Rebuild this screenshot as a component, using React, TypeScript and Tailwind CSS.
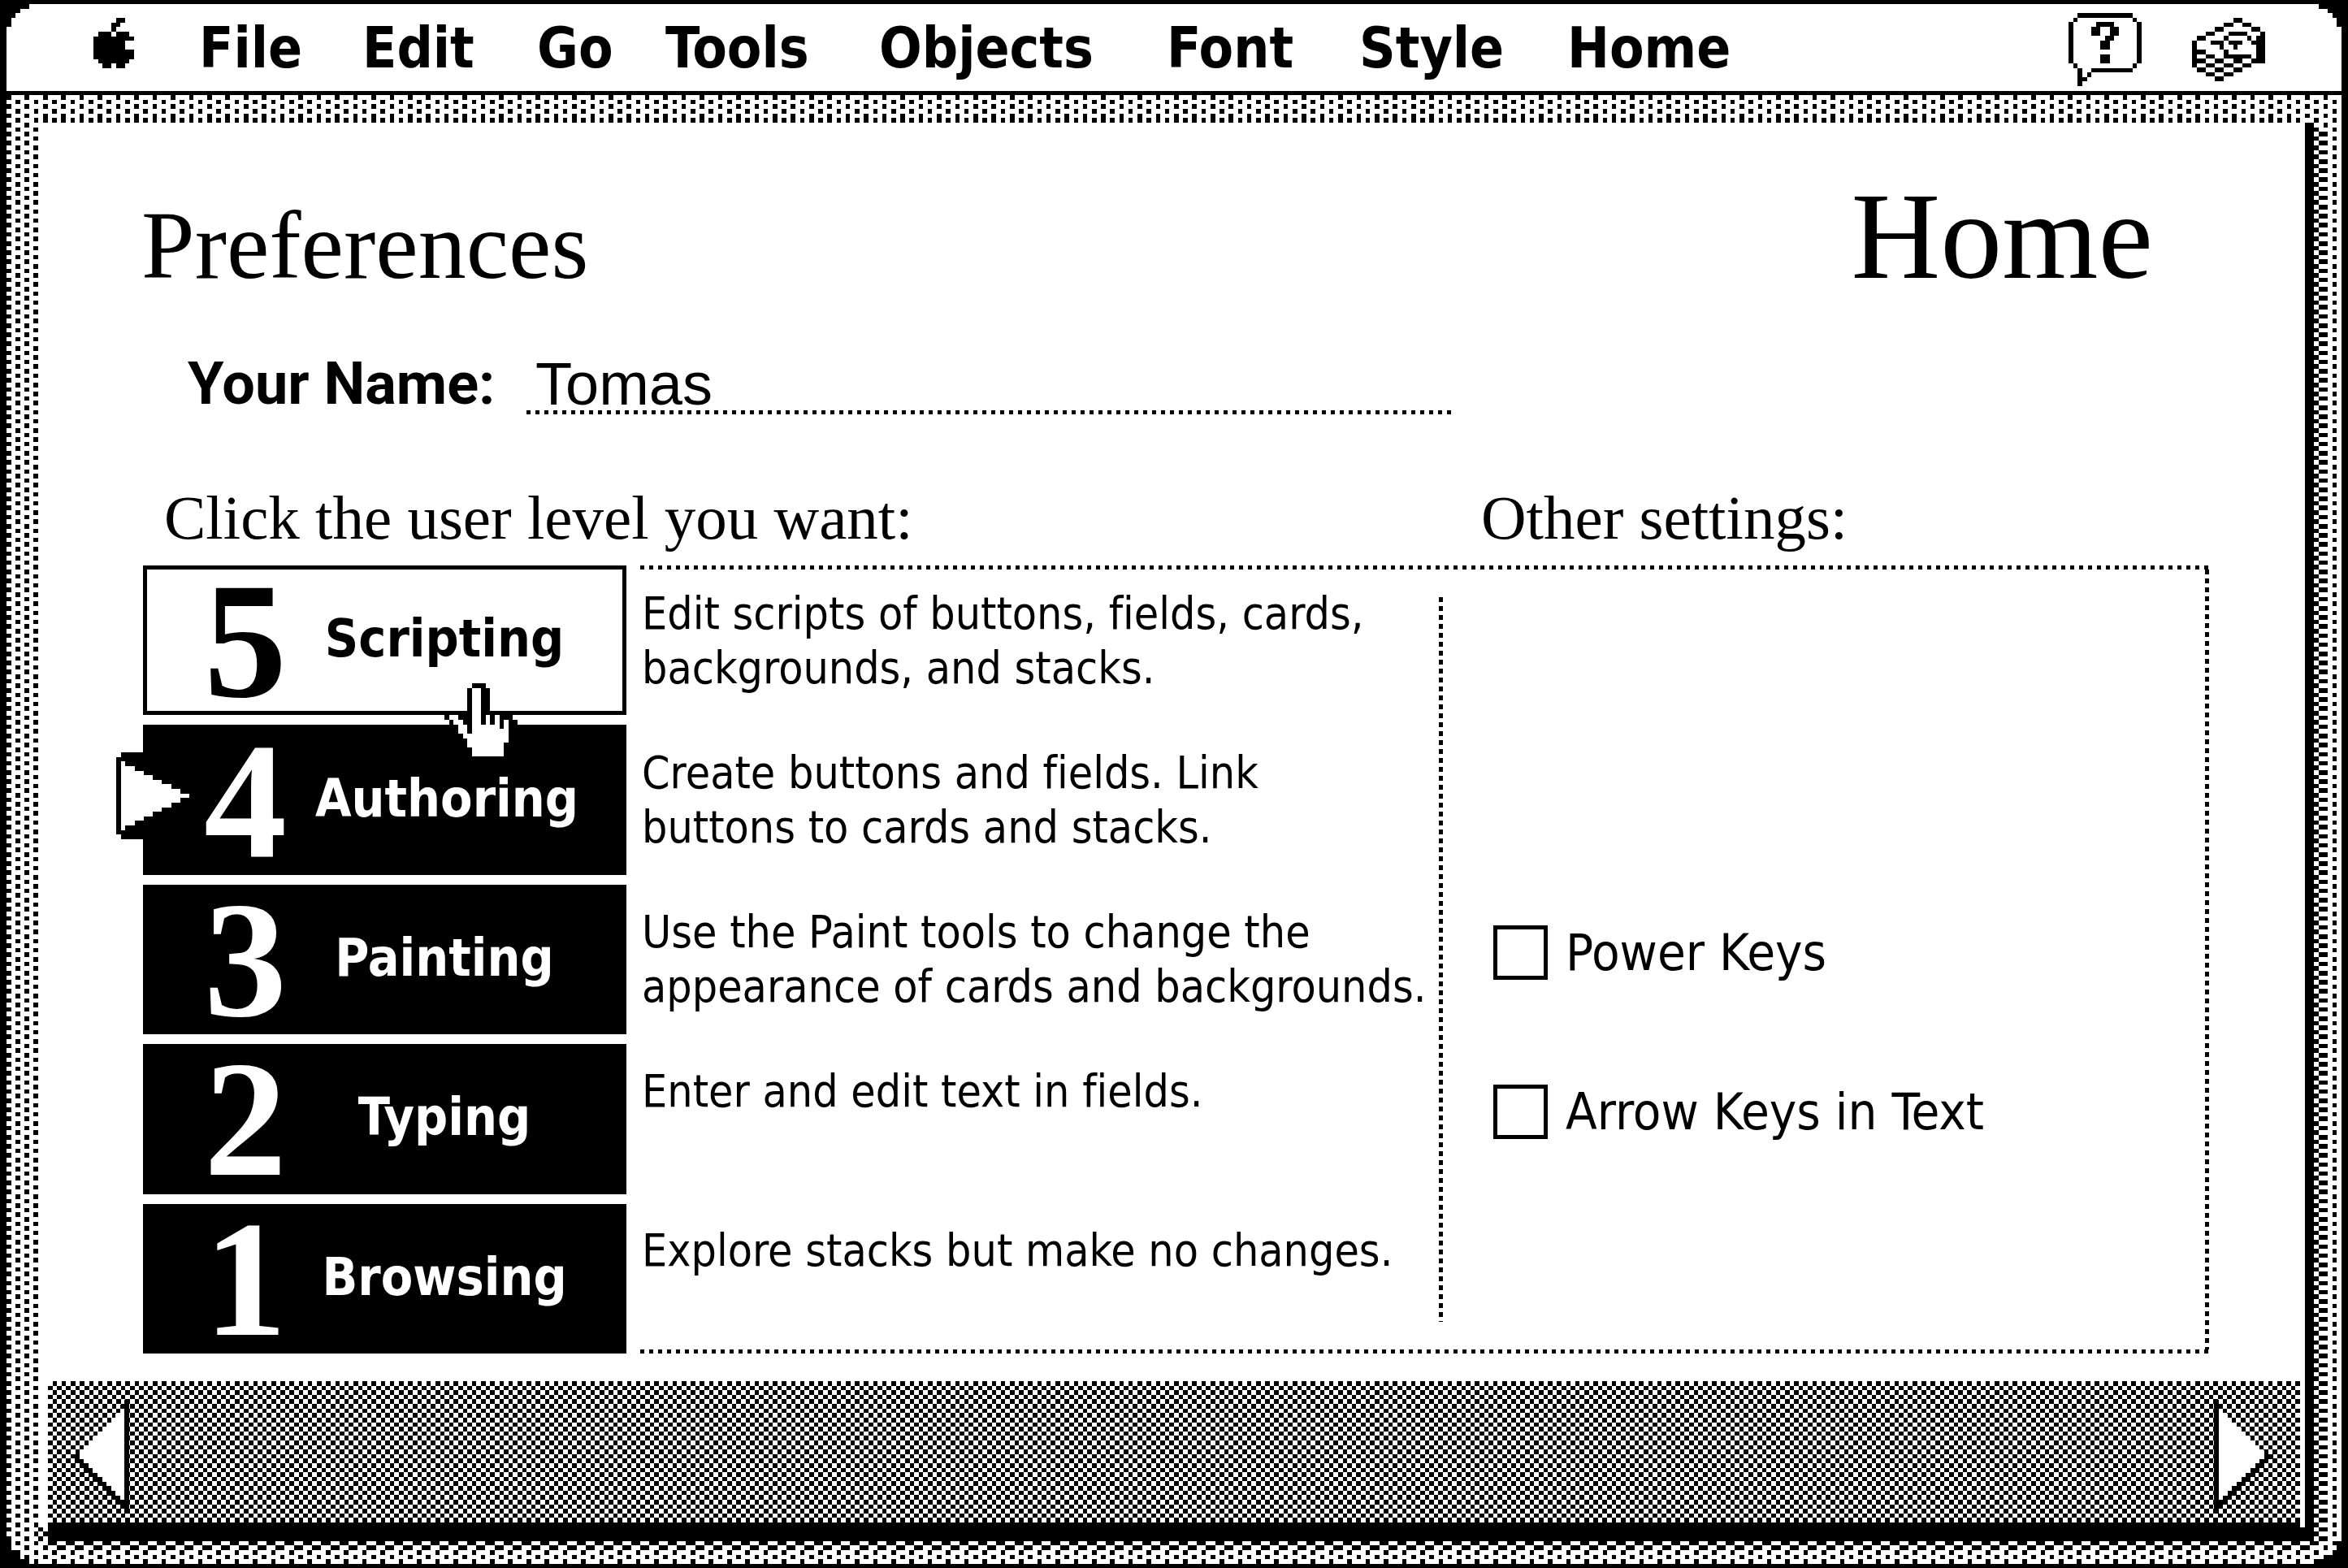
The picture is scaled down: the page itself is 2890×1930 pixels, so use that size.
import { Fragment } from "react";

type Test = (x: number, y: number) => boolean;

/* Path of unit squares for every cell of a w × h grid that passes the test. */
function cells(w: number, h: number, test: Test) {
  let d = "";
  for (let y = 0; y < h; y++) {
    for (let x = 0; x < w; x++) {
      if (!test(x, y)) continue;
      let end = x + 1;
      while (end < w && test(end, y)) end++;
      d += `M${x} ${y}H${end}V${y + 1}H${x}Z`;
      x = end;
    }
  }
  return d;
}

function Texture({ w, h, test, className }: { w: number; h: number; test: Test; className: string }) {
  return (
    <svg
      aria-hidden="true"
      viewBox={`0 0 ${w} ${h}`}
      preserveAspectRatio="none"
      shapeRendering="crispEdges"
      className={className}
    >
      <path d={cells(w, h, test)} fill="#000" />
    </svg>
  );
}

/* "#" is a black pixel, "o" a white one, "." is see-through. */
function Bitmap({ rows, className }: { rows: string[]; className: string }) {
  const w = rows[0].length;
  const h = rows.length;
  return (
    <svg
      aria-hidden="true"
      viewBox={`0 0 ${w} ${h}`}
      preserveAspectRatio="none"
      shapeRendering="crispEdges"
      className={className}
    >
      <path d={cells(w, h, (x, y) => rows[y][x] === "o")} fill="#fff" />
      <path d={cells(w, h, (x, y) => rows[y][x] === "#")} fill="#000" />
    </svg>
  );
}

const APPLE = [
  ".....##..",
  "....##...",
  "....#....",
  ".###.###.",
  "#########",
  "#######..",
  "#######..",
  "#########",
  "#########",
  ".#######.",
  "..##.##..",
];

const HELP = [
  "..############..",
  ".#............#.",
  "#.....####.....#",
  "#....##..##....#",
  "#....##..##....#",
  "#.......##.....#",
  "#......##......#",
  "#......##......#",
  "#..............#",
  "#......##......#",
  "#......##......#",
  ".#............#.",
  "..#..#########..",
  "..#.#...........",
  "..##............",
  "..#.............",
];

const STACK = [
  ".........##.....",
  ".......##..##...",
  ".....##......##.",
  "...##...####...#",
  ".##....#....#.##",
  "#...###.###..###",
  "#.....#..#....##",
  "###....#......##",
  "#..##..######.##",
  "###..##..##..###",
  "#..##..##..##...",
  ".##..##..##.....",
  "...##..##.......",
  ".....##.........",
];

const HAND = [
  "......###.......",
  ".....#oo##......",
  ".....#oo##......",
  ".....#oo##......",
  ".....#oo##......",
  ".....#oo##......",
  ".....#oo##......",
  "#oo###oo#o#o###.",
  ".#oo##oo#o#o#o##",
  ".##oo#oooooo#o##",
  "..#oo#oooooooo##",
  "..##oooooooooo##",
  "...##ooooooooo#.",
  "....#oooooooo##.",
  "....##ooooooo#..",
  ".....#ooooooo#..",
];

const MARKER = Array.from({ length: 19 }, (_, y) => {
  const white = 15 - 2 * Math.abs(y - 9);
  return Array.from({ length: 16 }, (_, x) => {
    if (x === 0) return y === 0 || y === 18 ? "." : "#";
    return white > 0 && x <= white ? "o" : "#";
  }).join("");
});

const NEXT = Array.from({ length: 25 }, (_, y) => {
  let white = 0;
  if (y >= 2 && y <= 11) white = y - 1;
  if (y >= 12 && y <= 21) white = 22 - y;
  return Array.from({ length: 13 }, (_, x) => {
    if (x === 0) return "#";
    if (x <= white) return "o";
    if (y >= 12 && y <= 23 && x <= white + 2 && x <= 24 - y) return "#";
    return y === 1 && x === 1 ? "#" : ".";
  }).join("");
});

const PREVIOUS = NEXT.map((row) => row.slice(0, 12).split("").reverse().join(""));

const CORNER = ["#####", "###..", "##...", "#....", "#...."];
const CORNER_RIGHT = CORNER.map((row) => row.split("").reverse().join(""));

const desktop: Test = (x, y) => (y % 2 === 0 ? x % 4 === 0 : x % 4 === 2);

const topEdge: Test = (x, y) => desktop(x, y) || (y === 5 && x >= 8 && x <= 502 && x % 2 === 0);

/* Window shadow (two solid columns) running into the desktop pattern. */
const rightEdge: Test = (x, y) => {
  if (x <= 1) return true;
  if (y % 2 === 1) return x === 2 || x === 6;
  return x === 4 || (x === 3 && y > 0);
};

const bottomEdge: Test = (x, y) => {
  const inset = [0, 0, 0, 0, 1, 1, 2, 3, 5][y];
  if (x < inset || x > 511 - inset) return true;
  if (y <= 3) {
    if (x >= 9 && x <= 505) return !(y === 0 && x === 503);
    if (x < 9) return y % 2 === 1 ? x === 0 || x === 4 || x === 7 : x % 4 === 2 || (y === 2 && x === 8);
    return y % 2 === 1 ? x === 507 || x === 508 : x === 506 || x === 510;
  }
  if (y === 4) return x >= 9 && x <= 506 ? x % 4 === 1 || x % 4 === 2 : x % 4 === 2;
  if (y === 5) return x >= 9 && x <= 506 ? x % 4 === 0 || x % 4 === 3 : x % 4 === 0;
  return y % 2 === 0 ? x % 4 === 2 : x % 4 === 0;
};

const checker: Test = (x, y) => (x + y) % 2 === 1;

const MENUS = ["File", "Edit", "Go", "Tools", "Objects", "Font", "Style", "Home"];

const LEVELS = [
  { n: 5, name: "Scripting", text: ["Edit scripts of buttons, fields, cards,", "backgrounds, and stacks."] },
  { n: 4, name: "Authoring", text: ["Create buttons and fields. Link", "buttons to cards and stacks."] },
  { n: 3, name: "Painting", text: ["Use the Paint tools to change the", "appearance of cards and backgrounds."] },
  { n: 2, name: "Typing", text: ["Enter and edit text in fields."] },
  { n: 1, name: "Browsing", text: ["Explore stacks but make no changes."] },
];

const HOVERED = 5;
const CURRENT = 4;

function MenuBar() {
  return (
    <header className="relative flex h-[112px] items-start border-b-[5px] border-black bg-white pt-[11px] pl-[107px] pr-[94px]">
      <Bitmap rows={CORNER} className="absolute left-0 top-0 h-7 w-7" />
      <Bitmap rows={CORNER_RIGHT} className="absolute right-0 top-0 h-7 w-7" />
      <button aria-label="Apple menu" className="mt-[6px] mr-20 shrink-0">
        <Bitmap rows={APPLE} className="block h-[62px] w-[50px]" />
      </button>
      <nav className="grid flex-1 grid-cols-[201px_215px_158px_263px_354px_237px_256px_auto] justify-start text-[69px] leading-[86px] font-bold [font-family:'DejaVu_Sans_Condensed','DejaVu_Sans',sans-serif]">
        {MENUS.map((m) => (
          <button key={m} className="text-left">
            {m}
          </button>
        ))}
      </nav>
      <button aria-label="Help" className="mr-[62px] shrink-0">
        <Bitmap rows={HELP} className="block h-[90px] w-[90px]" />
      </button>
      <button aria-label="HyperCard" className="mt-[6px] shrink-0">
        <Bitmap rows={STACK} className="block h-[78px] w-[90px]" />
      </button>
    </header>
  );
}

function LevelButton({ n, name }: { n: number; name: string }) {
  const hovered = n === HOVERED;
  return (
    <button
      className={`relative grid flex-1 grid-cols-[172px_318px] items-center border-[5px] border-black pl-[35px] ${
        hovered ? "z-10 bg-white text-black" : "bg-black text-white"
      }`}
    >
      <span className="text-center text-[204px] leading-[170px] font-bold [font-family:'Liberation_Serif',serif]">{n}</span>
      <span className="pb-1 text-center text-[64px] leading-[80px] font-bold [font-family:'DejaVu_Sans_Condensed','DejaVu_Sans',sans-serif]">
        {name}
      </span>
      {n === CURRENT && <Bitmap rows={MARKER} className="absolute left-[-38px] top-[29px] h-[107px] w-[90px]" />}
      {hovered && <Bitmap rows={HAND} className="absolute left-[366px] top-[140px] h-[90px] w-[90px]" />}
    </button>
  );
}

function DottedRow() {
  return <div className="h-[5px] bg-[repeating-linear-gradient(90deg,#000_0_5px,transparent_5px_11px)]" />;
}

function DottedColumn({ className }: { className: string }) {
  return (
    <div className={`w-[5px] bg-[repeating-linear-gradient(180deg,#000_0_6px,transparent_6px_11px)] ${className}`} />
  );
}

function Setting({ id, label }: { id: string; label: string }) {
  return (
    <div className="flex items-center gap-[22px]">
      <input id={id} type="checkbox" className="h-[67px] w-[67px] appearance-none border-[5px] border-black bg-white checked:bg-black" />
      <label htmlFor={id} className="text-[63px] leading-[67px]">
        {label}
      </label>
    </div>
  );
}

function Card() {
  return (
    <main className="flex flex-1 flex-col pt-[70px] pr-[118px] pb-[34px] pl-[127px] [font-family:'DejaVu_Sans_Condensed','DejaVu_Sans',sans-serif]">
      <div className="flex h-[140px] items-baseline justify-between pr-[69px] leading-[140px] [font-family:'Liberation_Serif',serif]">
        <h1 className="text-[118px]">Preferences</h1>
        <p className="text-[152px]">Home</p>
      </div>

      <div className="mt-[74px] flex pl-[57px] leading-[75px]">
        <label htmlFor="user-name" className="w-[417px] text-[72px] font-bold [font-family:Roboto,sans-serif]">
          Your Name:
        </label>
        <div className="w-[1140px]">
          <input
            id="user-name"
            defaultValue="Tomas"
            className="block h-[70px] w-full bg-transparent pt-[5px] pl-[11px] text-[74px] leading-[65px] outline-none [font-family:'Liberation_Sans',sans-serif]"
          />
          <DottedRow />
        </div>
      </div>

      <div className="mt-[87px] flex pl-7 text-[77px] leading-[80px] [font-family:'Liberation_Serif',serif]">
        <h2 className="w-[1621px]">Click the user level you want:</h2>
        <h2>Other settings:</h2>
      </div>

      <section className="mt-[19px] ml-[2px] flex flex-1 gap-[17px]">
        <div className="flex w-[595px] flex-col gap-3">
          {LEVELS.map((l) => (
            <LevelButton key={l.n} n={l.n} name={l.name} />
          ))}
        </div>

        <div className="flex flex-1 flex-col">
          <DottedRow />
          <div className="flex flex-1">
            <div className="grid w-[983px] grid-rows-[repeat(4,196px)_minmax(176px,1fr)] pl-[2px]">
              {LEVELS.map((l) => (
                <p key={l.n} className="pt-[21px] text-[55px] leading-[67px] whitespace-nowrap [font-variant-ligatures:none]">
                  {l.text.map((line, i) => (
                    <Fragment key={line}>
                      {i > 0 && <br />}
                      {line}
                    </Fragment>
                  ))}
                </p>
              ))}
            </div>
            <DottedColumn className="my-[34px]" />
            <div className="grid flex-1 grid-rows-[repeat(4,196px)_minmax(176px,1fr)] pl-[62px]">
              <div className="row-start-3 pt-[46px]">
                <Setting id="power-keys" label="Power Keys" />
              </div>
              <div className="row-start-4 pt-[46px]">
                <Setting id="arrow-keys" label="Arrow Keys in Text" />
              </div>
            </div>
            <DottedColumn className="" />
          </div>
          <DottedRow />
        </div>
      </section>
    </main>
  );
}

function CardNavigation() {
  return (
    <nav className="relative mr-[6px] ml-3 flex h-[174px] items-start justify-between px-[33px] pt-[23px]">
      <Texture w={494} h={31} test={checker} className="absolute inset-0 h-full w-full" />
      <button aria-label="Previous card" className="relative">
        <Bitmap rows={PREVIOUS} className="block h-[140px] w-[67px]" />
      </button>
      <button aria-label="Next card" className="relative">
        <Bitmap rows={NEXT} className="block h-[140px] w-[73px]" />
      </button>
    </nav>
  );
}

export default function App() {
  return (
    <div className="flex min-h-screen flex-col bg-black px-2 py-[5px] text-black">
      <MenuBar />
      <div className="flex flex-1 flex-col bg-white">
        <Texture w={512} h={6} test={topEdge} className="block h-[34px] w-full" />
        <div className="flex flex-1">
          <div className="relative w-[39px]">
            <Texture w={7} h={307} test={desktop} className="absolute inset-0 h-full w-full" />
          </div>
          <div className="flex flex-1 flex-col">
            <Card />
            <CardNavigation />
          </div>
          <div className="relative w-[45px]">
            <Texture w={8} h={307} test={rightEdge} className="absolute inset-0 h-full w-full" />
          </div>
        </div>
        <Texture w={512} h={9} test={bottomEdge} className="block h-[51px] w-full" />
      </div>
    </div>
  );
}
